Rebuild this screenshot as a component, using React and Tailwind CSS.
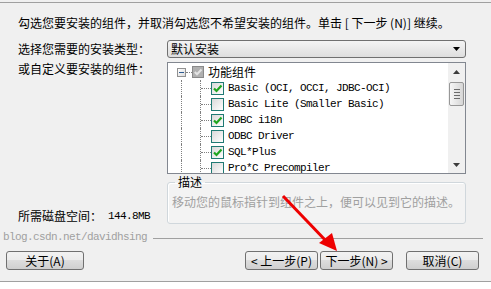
import React from "react";

const items = [
  { label: "Basic (OCI, OCCI, JDBC-OCI)", checked: true },
  { label: "Basic Lite (Smaller Basic)", checked: false },
  { label: "JDBC i18n", checked: true },
  { label: "ODBC Driver", checked: false },
  { label: "SQL*Plus", checked: true },
  { label: "Pro*C Precompiler", checked: false },
];

const mono = "font-['Liberation_Mono','Noto_Sans_CJK_SC',monospace] text-[11px] tracking-[-0.6px]";
const btn =
  "flex h-[19px] items-center justify-center rounded-[3px] border border-[#707070] bg-[linear-gradient(#f2f2f2,#ebebeb_50%,#dddddd_50%,#cfcfcf)] text-[12px] leading-none text-black";

function CheckBox({ checked }) {
  return (
    <div className="flex h-[13px] w-[13px] items-center justify-center border border-[#1f7a74] bg-gradient-to-br from-[#d9d9d9] to-[#ffffff]">
      {checked && (
        <svg width="11" height="11" viewBox="0 0 11 11">
          <path d="M2 5.5 L4.5 8 L9.5 2.5" fill="none" stroke="#1fa61f" strokeWidth="2.2" />
        </svg>
      )}
    </div>
  );
}

function TreeRow({ label, checked }) {
  return (
    <div className="flex h-[16px] items-center">
      <div className="w-[13px] shrink-0" />
      <div className="h-full w-[19px] shrink-0 border-l border-dotted border-[#808080]" />
      <div className="flex h-full w-[11px] shrink-0 items-center border-l border-dotted border-[#808080]">
        <div className="w-full border-t border-dotted border-[#808080]" />
      </div>
      <CheckBox checked={checked} />
      <span className={"ml-[4px] whitespace-nowrap leading-[16px] text-black " + mono}>{label}</span>
    </div>
  );
}

function ScrollBar() {
  return (
    <div className="flex h-full w-[17px] shrink-0 flex-col bg-[#f0f0f0]">
      <div className="flex h-[17px] items-center justify-center">
        <svg width="7" height="4" viewBox="0 0 7 4">
          <path d="M0 4 L3.5 0 L7 4 Z" fill="#3c3c3c" />
        </svg>
      </div>
      <div className="mx-[1px] mt-[2px] flex h-[24px] flex-col items-center justify-center gap-[2px] rounded-[2px] border border-[#979797] bg-gradient-to-r from-[#f6f6f6] to-[#d6d6d6]">
        <div className="h-px w-[6px] bg-[#6b6b6b]" />
        <div className="h-px w-[6px] bg-[#6b6b6b]" />
        <div className="h-px w-[6px] bg-[#6b6b6b]" />
        <div className="h-px w-[6px] bg-[#6b6b6b]" />
      </div>
      <div className="flex-1" />
      <div className="flex h-[17px] items-center justify-center">
        <svg width="7" height="4" viewBox="0 0 7 4">
          <path d="M0 0 L7 0 L3.5 4 Z" fill="#3c3c3c" />
        </svg>
      </div>
    </div>
  );
}

export default function App() {
  return (
    <div className="relative h-[289px] w-[491px] overflow-hidden bg-[#f0f0f0] font-['Noto_Sans_CJK_SC',sans-serif] text-[12px] text-black">
      <div className="mt-[2px] border-t border-[#a0a0a0]" />

      {/* Instruction */}
      <div className="mt-[13px] whitespace-nowrap pl-[18px] leading-[14px]">
        勾选您要安装的组件，并取消勾选您不希望安装的组件。单击 [ 下一步 (N)] 继续。
      </div>

      {/* Body */}
      <div className="mt-[10px] flex">
        <div className="flex w-[167px] shrink-0 flex-col pl-[18px] leading-[14px]">
          <div className="mt-[2px]">选择您需要的安装类型：</div>
          <div className="mt-[6px]">或自定义要安装的组件：</div>
          <div className="mt-[133px] flex items-center">
            <span>所需磁盘空间：</span>
            <span className={"ml-[6px] " + mono}>144.8MB</span>
          </div>
        </div>

        <div className="flex w-[299px] shrink-0 flex-col">
          {/* Select */}
          <div className="flex h-[18px] items-center rounded-[3px] border border-[#707070] bg-gradient-to-b from-[#f4f4f4] to-[#dedede] pl-[3px] pr-[5px]">
            <span className="leading-none">默认安装</span>
            <div className="flex-1" />
            <svg width="7" height="4" viewBox="0 0 7 4">
              <path d="M0 0 L7 0 L3.5 4 Z" fill="#000" />
            </svg>
          </div>

          {/* Tree */}
          <div className="mt-[4px] flex h-[112px] overflow-hidden border border-[#828790] bg-white">
            <div className="flex-1 overflow-hidden pt-px">
              <div className="flex h-[16px] items-center">
                <div className="w-[9px] shrink-0" />
                <div className="flex h-[9px] w-[9px] shrink-0 items-center justify-center border border-[#919191] bg-gradient-to-br from-white to-[#dcdcdc]">
                  <div className="h-px w-[5px] bg-[#2e5b92]" />
                </div>
                <div className="w-[6px] shrink-0 border-t border-dotted border-[#808080]" />
                <div className="flex h-[12px] w-[12px] shrink-0 items-center justify-center border border-[#8a8a8a] bg-[#b0b0b0]">
                  <svg width="10" height="10" viewBox="0 0 10 10">
                    <path d="M1.8 5 L4 7.2 L8.5 2.5" fill="none" stroke="#e4e4e4" strokeWidth="2" />
                  </svg>
                </div>
                <span className="ml-[4px] leading-[16px]">功能组件</span>
              </div>
              {items.map((it) => (
                <TreeRow key={it.label} {...it} />
              ))}
            </div>
            <ScrollBar />
          </div>

          {/* Description group */}
          <fieldset className="mt-[1px] h-[49px] rounded-[3px] border border-[#d0d7dc] bg-[#f3f3f3] px-[4px] pb-[10px] shadow-[inset_1px_1px_0_#ffffff]">
            <legend className="ml-[3px] px-[3px] leading-[14px]">描述</legend>
            <div className="mt-[6px] whitespace-nowrap leading-[14px] text-[#a0a0a0]">
              移动您的鼠标指针到组件之上，便可以见到它的描述。
            </div>
          </fieldset>
        </div>
      </div>

      {/* Branding line */}
      <div className="mt-[6px] flex items-center pl-[3px] pr-[8px]">
        <span className={"whitespace-nowrap leading-[14px] text-[#a0a0a0] " + mono}>
          blog.csdn.net/davidhsing
        </span>
        <div className="ml-[6px] mt-[3px] h-px flex-1 bg-[#a0a0a0]" />
      </div>

      {/* Buttons */}
      <div className="mt-[7px] flex items-center">
        <button className={btn + " ml-[6px] w-[78px]"}>关于(A)</button>
        <div className="flex-1" />
        <button className={btn + " w-[73px]"}>&lt; 上一步(P)</button>
        <button className={btn + " ml-[2px] w-[73px]"}>下一步(N) &gt;</button>
        <button className={btn + " ml-[13px] mr-[12px] w-[73px]"}>取消(C)</button>
      </div>

      <div className="mt-[11px] h-[10px] border-t border-[#a0a0a0] bg-white" />

      {/* Red arrow overlay */}
      <svg className="pointer-events-none absolute left-0 top-0" width="491" height="289" viewBox="0 0 491 289">
        <line x1="283" y1="196" x2="328" y2="243" stroke="#ee0000" strokeWidth="3" />
        <polygon points="337,251 319,243 332,233" fill="#ee0000" />
      </svg>
    </div>
  );
}
